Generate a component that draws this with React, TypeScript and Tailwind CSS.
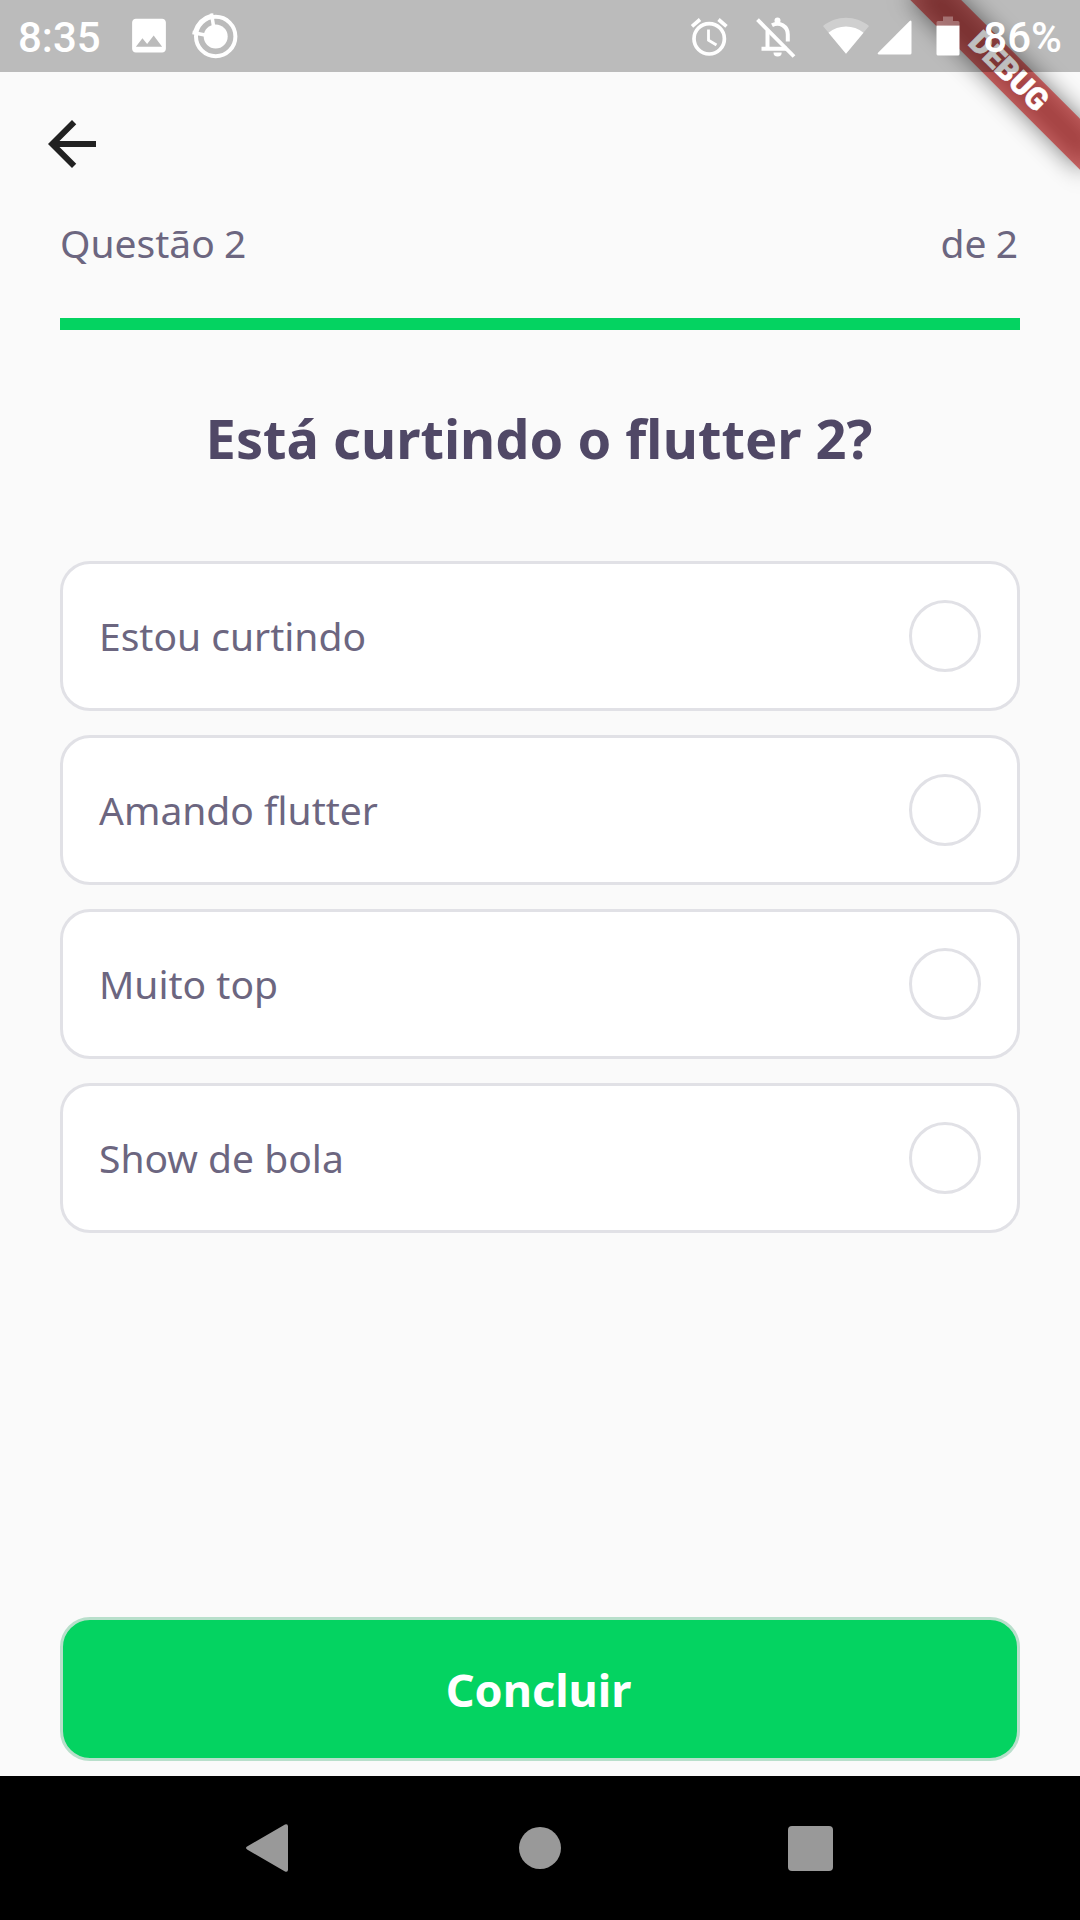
import React from "react";

const answers = ["Estou curtindo", "Amando flutter", "Muito top", "Show de bola"];

function DebugBanner() {
  return (
    <div className="pointer-events-none absolute right-0 top-0 h-[240px] w-[240px] overflow-hidden">
      <div className="absolute left-full top-0 h-0 w-0 origin-top-left rotate-45">
        <div className="absolute -left-[120px] top-[84px] h-[36px] w-[240px] bg-black/50 blur-[11.9px]" />
        <div className="absolute -left-[120px] top-[84px] flex h-[36px] w-[240px] items-center justify-center bg-[#b71c1c]/63 pb-px font-['Roboto'] text-[30.6px] font-black leading-none text-white [-webkit-text-stroke:0.6px_white]">
          DEBUG
        </div>
      </div>
    </div>
  );
}

function StatusBar() {
  return (
    <header className="relative z-10 flex h-[72px] shrink-0 items-center bg-black/25 pl-[18px] pr-[18px] font-['Roboto'] text-[42px] font-medium leading-none text-white">
      <span className="w-[108px] pt-[3px]">8:35</span>
      <svg className="-mt-px h-[45px] w-[46px]" viewBox="0 0 24 24" fill="currentColor">
        <path d="M21 19V5c0-1.1-.9-2-2-2H5c-1.1 0-2 .9-2 2v14c0 1.1.9 2 2 2h14c1.1 0 2-.9 2-2zM8.500 13.500l2.500 3.010L14.500 12l4.500 6H5l3.500-4.500z" />
      </svg>
      <svg className="ml-[18px] h-[48px] w-[48px]" viewBox="190 12 48 48" fill="none" stroke="currentColor">
        <circle cx="215.700" cy="36.500" r="19.700" strokeWidth="4" />
        <circle cx="215.700" cy="36.500" r="12" fill="currentColor" stroke="none" />
        <path d="M192.500 32.500l12.500 2.500M211.500 13.500l2 12.500" strokeWidth="3.500" />
        <path d="M194 31.500C197 22.500 202.500 17 212 14.500" strokeWidth="2" />
      </svg>

      <div className="ml-auto flex items-center">
        <svg className="h-[45px] w-[45px]" viewBox="685.500 13.500 45 45" fill="none" stroke="currentColor">
          <circle cx="708.700" cy="38.300" r="15.200" strokeWidth="3.700" />
          <path d="M708 29v10.700l8 4.800" strokeWidth="2.800" />
          <path d="M691.500 25.800l8-6.800M718 19l8 6.800" strokeWidth="3.700" />
        </svg>
        <svg className="ml-[21px] h-[45px] w-[48px]" viewBox="751.500 13.500 48 45" fill="none" stroke="currentColor">
          <path d="M757 19.200L793.500 56" strokeWidth="3.900" />
          <path d="M767 30v18.300M761 48.300h25.500" strokeWidth="4" />
          <path d="M771.500 24.700c7.500-4 15.800 1 15.800 9.300v7" strokeWidth="4" />
          <circle cx="777" cy="20" r="3" fill="currentColor" stroke="none" />
          <path d="M773 52h8.200a4.100 4.100 0 0 1-8.200 0z" fill="currentColor" stroke="none" />
        </svg>
        <svg className="ml-[21px] h-[45px] w-[51px]" viewBox="820.500 13.500 51 45" fill="currentColor">
          <path d="M845.500 53.300L822.500 25.500C836 14.500 855 14.500 868.500 25.500z" fillOpacity="0.300" />
          <path d="M845.500 53.300L828 32.300C838 24 853 24 863 32.300z" />
        </svg>
        <svg className="h-[45px] w-[45px]" viewBox="871.500 13.500 45 45" fill="currentColor">
          <path d="M878.500 54h31q1.500 0 1.500-1.500v-31q0-2.500-1.800-.9L877.500 52.300q-1 1.700 1 1.700z" />
        </svg>
        <svg className="ml-[15px] h-[45px] w-[33px]" viewBox="931.500 13.500 33 45" fill="currentColor">
          <path d="M936 25v-3q0-1.500 1.500-1.500h5V16h10v4.500h5q1.500 0 1.500 1.500v3z" fillOpacity="0.300" />
          <path d="M936 25h23v28.500q0 1.500-1.500 1.500h-20q-1.500 0-1.500-1.500z" />
        </svg>
        <span className="ml-[18px] pt-[3px]">86%</span>
      </div>
    </header>
  );
}

function Answer({ label }: { label: string }) {
  return (
    <li className="flex h-[150px] items-center justify-between rounded-[30px] border-3 border-[#e1e1e6] bg-white px-[36px]">
      <span className="pb-[2px]">{label}</span>
      <span className="h-[72px] w-[72px] rounded-full border-3 border-[#e1e1e6] bg-white" />
    </li>
  );
}

function NavigationBar() {
  return (
    <nav className="flex h-[144px] shrink-0 items-center bg-black pl-[240px] text-[#999999]">
      <svg className="h-[54px] w-[54px]" viewBox="0 0 54 54" fill="currentColor">
        <path d="M7.500 25.300L45 3.500q3-1 3 2v43q0 3-3 2L7.500 28.700q-3-1.700 0-3.400z" />
      </svg>
      <span className="ml-[225px] h-[42px] w-[42px] rounded-full bg-[#999999]" />
      <span className="ml-[226.500px] h-[45px] w-[45px] rounded-[4px] bg-[#999999]" />
    </nav>
  );
}

export default function App() {
  return (
    <div className="relative flex h-[1920px] w-[1080px] flex-col overflow-hidden bg-[#fafafa] font-['Noto_Sans',sans-serif] text-[39px] leading-[53px] text-[#6c6680]">
      <DebugBanner />
      <StatusBar />
      <main className="flex flex-1 flex-col px-[60px] pb-[15px]">
        <button className="-ml-[24px] mt-[36px] h-[72px] w-[72px] text-[#212121]" aria-label="Voltar">
          <svg className="h-[72px] w-[72px]" viewBox="0 0 24 24" fill="currentColor">
            <path d="M20 11H7.830l5.590-5.590L12 4l-8 8 8 8 1.410-1.410L7.830 13H20v-2z" />
          </svg>
        </button>
        <div className="mt-[36px] flex justify-between pr-[2px] [word-spacing:-1px]">
          <span>Questão 2</span>
          <span>de 2</span>
        </div>
        <div className="mt-[49px] h-[12px] bg-[#04d361]" />
        <h1 className="mt-[71px] pr-[2px] text-center text-[54.150px] font-bold leading-[74px] text-[#504866]">Está curtindo o flutter 2?</h1>
        <ul className="mt-[86px] flex flex-col gap-[24px]">
          {answers.map((label) => (
            <Answer key={label} label={label} />
          ))}
        </ul>
        <button className="mt-auto h-[144px] rounded-[30px] border-3 border-[#b8dfcb] bg-[#04d361] pr-[3px] text-[45px] font-bold text-white">
          Concluir
        </button>
      </main>
      <NavigationBar />
    </div>
  );
}
